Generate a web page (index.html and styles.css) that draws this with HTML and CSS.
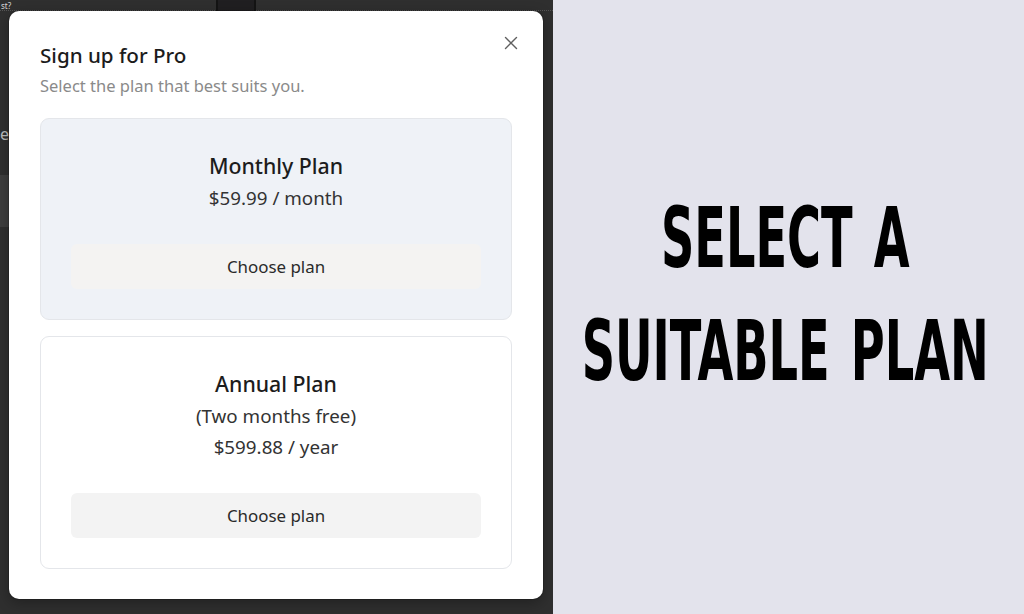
FILE: index.html
```html
<!DOCTYPE html>
<html lang="en">
<head>
<meta charset="utf-8">
<title>Sign up for Pro</title>
<link rel="stylesheet" href="styles.css">
</head>
<body>
<div class="page">
  <section class="app">
    <div class="app-bg">
      <div class="bg-top">
        <span class="bg-q">st?</span>
        <span class="bg-box"></span>
      </div>
      <div class="bg-line">er</div>
      <div class="bg-thumb"></div>
    </div>
    <div class="modal">
      <button class="close" aria-label="Close">
        <svg width="14" height="14" viewBox="0 0 14 14"><path d="M1.5 1.5 L12.5 12.5 M12.5 1.5 L1.5 12.5" stroke="#5f5f5f" stroke-width="1.4" fill="none" stroke-linecap="round"/></svg>
      </button>
      <h1 class="modal-title">Sign up for Pro</h1>
      <p class="modal-sub">Select the plan that best suits you.</p>
      <div class="plans">
        <div class="plan plan-active">
          <h2 class="plan-name">Monthly Plan</h2>
          <div class="plan-info">
            <p>$59.99 / month</p>
          </div>
          <button class="choose">Choose plan</button>
        </div>
        <div class="plan">
          <h2 class="plan-name">Annual Plan</h2>
          <div class="plan-info">
            <p>(Two months free)</p>
            <p>$599.88 / year</p>
          </div>
          <button class="choose">Choose plan</button>
        </div>
      </div>
    </div>
  </section>
  <section class="caption">
    <p class="caption-text">SELECT A<br>SUITABLE PLAN</p>
  </section>
</div>
</body>
</html>
```

FILE: styles.css
```css
* { box-sizing: border-box; }
html, body { margin: 0; padding: 0; }
body {
  width: 1024px;
  height: 614px;
  overflow: hidden;
  font-family: "Noto Sans", "Open Sans", sans-serif;
}
.page {
  display: flex;
  width: 1024px;
  height: 614px;
}
.app {
  position: relative;
  flex: 0 0 553px;
  width: 553px;
  height: 614px;
  background: #2f2f2f;
  overflow: hidden;
}
.app-bg {
  color: #cfcfcf;
}
.bg-top {
  display: flex;
  align-items: flex-start;
  height: 11px;
  border-bottom: 1px dotted #555;
}
.bg-q {
  font-size: 8px;
  line-height: 11px;
  padding-left: 1px;
  width: 216px;
  color: #d8d8d8;
}
.bg-box {
  width: 40px;
  height: 11px;
  background: #201f21;
  border-left: 2px solid #141414;
  border-right: 2px solid #141414;
}
.bg-line {
  margin-top: 112px;
  font-size: 16px;
  line-height: 22px;
  color: #bdbdbd;
}
.bg-thumb {
  margin-top: 30px;
  width: 12px;
  height: 52px;
  background: #3e3e3e;
}
.modal {
  position: absolute;
  left: 9px;
  top: 11px;
  width: 534px;
  height: 588px;
  background: #ffffff;
  border-radius: 10px;
  box-shadow: 0 0 0 1px rgba(0,0,0,0.15), 0 4px 14px rgba(0,0,0,0.3);
  padding: 30px 31px 32px 31px;
}
.close {
  position: absolute;
  top: 23px;
  right: 23px;
  width: 18px;
  height: 18px;
  padding: 0;
  border: 0;
  background: transparent;
  display: flex;
  align-items: center;
  justify-content: center;
}
.modal-title {
  margin: 0;
  font-size: 20.6px;
  line-height: 28px;
  font-weight: 500;
  color: #1c1c1c;
}
.modal-sub {
  margin: 4px 0 0;
  font-size: 16.5px;
  line-height: 25px;
  color: #8a8a8a;
}
.plans {
  margin-top: 20px;
  display: flex;
  flex-direction: column;
  gap: 16px;
}
.plan {
  border: 1px solid #e4e6ea;
  border-radius: 9px;
  background: #ffffff;
  padding: 33px 30px 30px;
  display: flex;
  flex-direction: column;
  align-items: center;
  text-align: center;
}
.plan-active {
  background: #eff2f7;
}
.plan-name {
  margin: 0;
  font-size: 21.3px;
  line-height: 28px;
  font-weight: 500;
  color: #1c1c1c;
}
.plan-info {
  margin-top: 3px;
}
.plan-info p {
  margin: 0;
  font-size: 18.8px;
  line-height: 31px;
  color: #333333;
}
.choose {
  margin-top: 30px;
  width: 100%;
  height: 45px;
  border: 0;
  border-radius: 6px;
  background: #f3f3f3;
  font-family: inherit;
  font-size: 16.9px;
  color: #2a2a2a;
}
.plan-active .choose {
  background: #f4f3f2;
}
.caption {
  flex: 1 1 auto;
  min-width: 0;
  overflow: hidden;
  background: #e3e3ec;
  display: flex;
  align-items: center;
  justify-content: center;
}
.caption-text {
  flex: 0 0 auto;
  margin: 0 6px 25px 0;
  white-space: nowrap;
  text-align: center;
  font-family: "DejaVu Sans Condensed", "DejaVu Sans", sans-serif;
  font-weight: 700;
  font-size: 62px;
  line-height: 84px;
  word-spacing: 6px;
  color: #000;
  transform: scale(0.83, 1.35);
}
```
